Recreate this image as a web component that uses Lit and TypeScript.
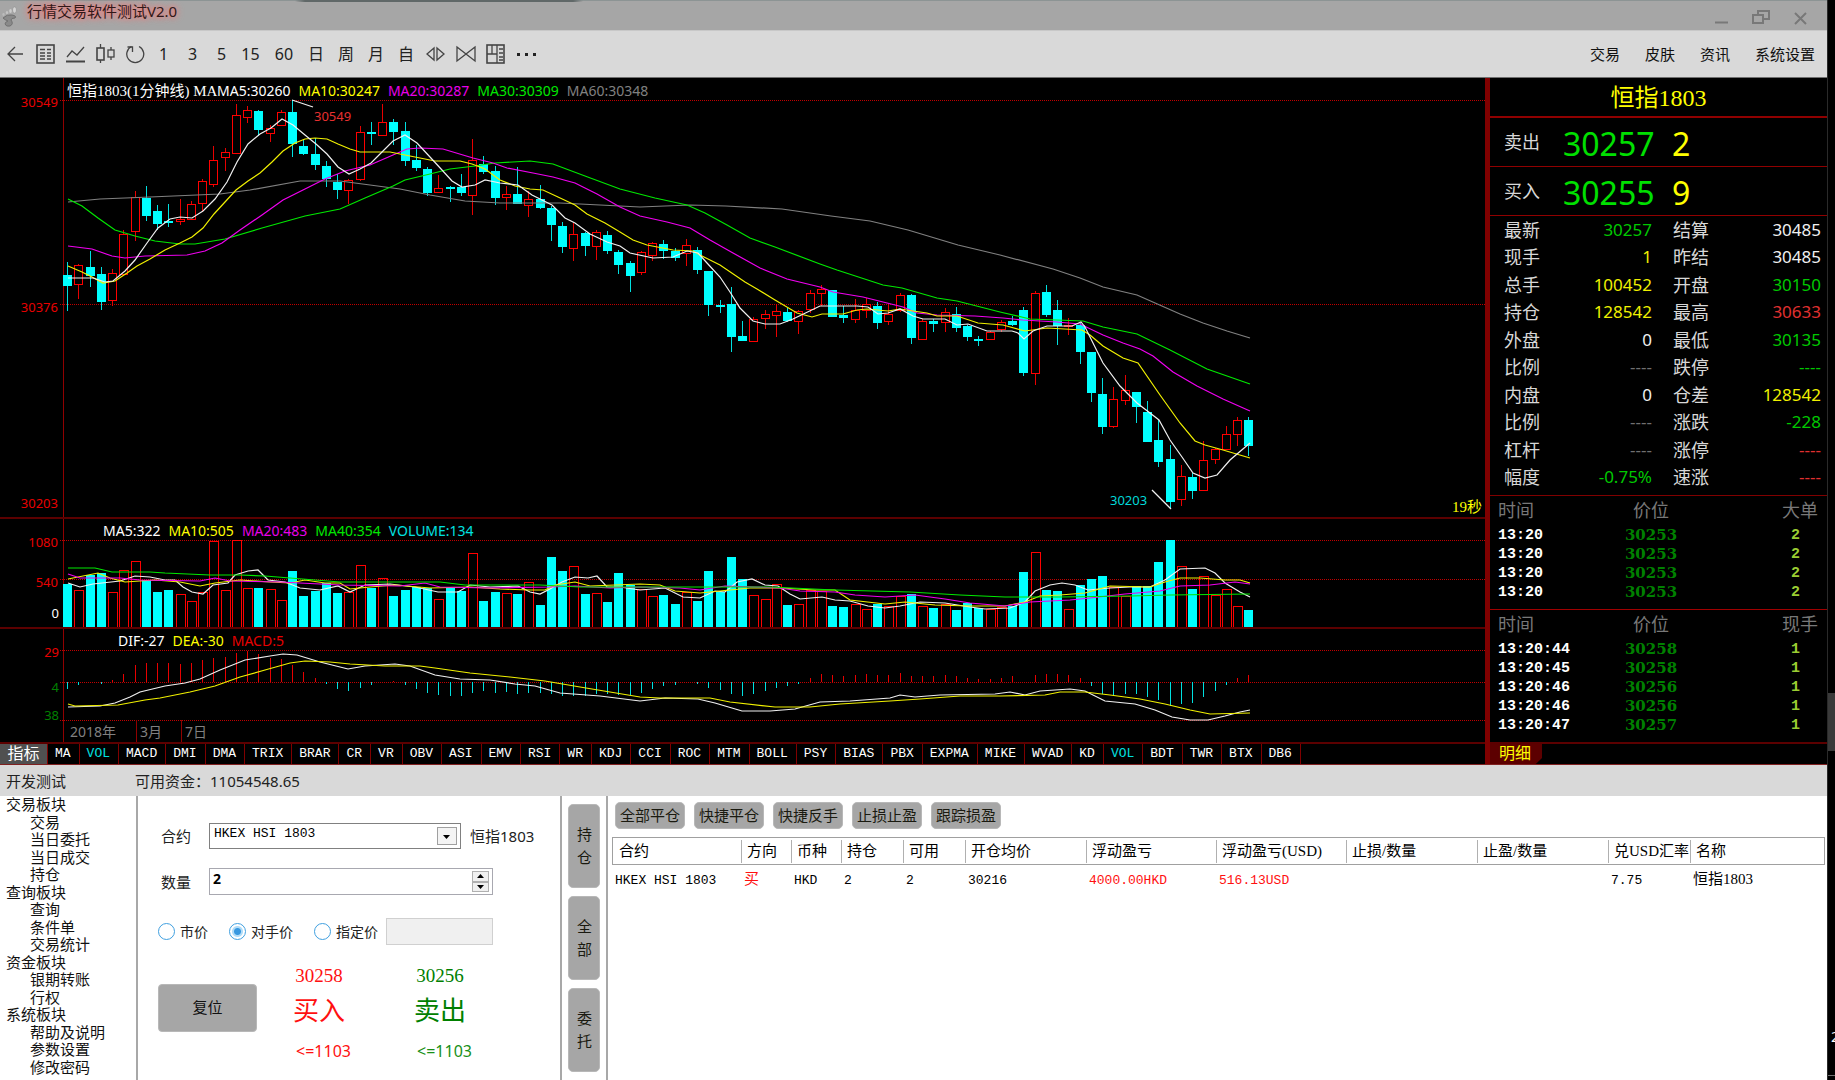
import { LitElement, html, svg, css, nothing } from "lit";
import { customElement, property, state } from "lit/decorators.js";
import { classMap } from "lit/directives/class-map.js";

type Candle = [number, number, number, number, number]; // up?, high, top, bottom, low
type Point = [number, number];

/* One column per minute: 1 = rising (hollow red), 0 = falling (solid cyan). */
const CANDLES: Candle[] = [
  [0,262,275,285,311],[1,264,265,284,299],[0,251,267,275,287],[0,267,274,301,310],[1,269,273,300,306],
  [1,230,234,274,275],[1,191,197,231,241],[0,186,198,215,221],[0,205,211,223,230],[0,204,221,222,227],
  [1,199,219,221,225],[1,201,204,219,219],[1,179,181,203,212],[1,146,160,184,187],[1,148,152,157,171],
  [1,104,115,153,153],[1,106,110,117,123],[0,110,111,129,136],[1,125,128,133,142],[1,110,112,125,125],
  [0,100,112,143,157],[0,140,146,153,155],[0,138,154,164,170],[0,161,166,178,187],[0,174,182,189,199],
  [1,179,180,190,204],[1,126,132,179,181],[0,122,132,133,145],[1,104,122,135,135],[0,119,122,131,145],
  [0,122,131,160,166],[0,145,160,167,171],[0,167,169,192,196],[1,175,188,192,192],[0,186,187,188,202],
  [0,174,187,192,196],[1,139,160,195,215],[0,156,164,171,174],[0,166,171,197,205],[1,186,194,197,210],
  [0,167,194,203,203],[1,191,199,205,217],[0,185,199,207,209],[0,206,208,224,241],[0,222,226,246,253],
  [1,223,234,248,261],[0,232,233,245,256],[1,230,232,246,260],[0,231,235,250,254],[0,250,252,264,274],
  [0,261,263,275,292],[1,251,252,272,275],[1,242,243,255,261],[0,240,244,250,259],[0,248,251,257,261],
  [1,239,245,253,266],[0,247,250,269,274],[0,271,271,304,316],[0,300,305,306,313],[0,287,304,336,352],
  [0,321,336,340,341],[1,317,319,341,341],[1,310,314,318,329],[1,304,311,315,337],[0,308,312,320,322],
  [1,310,311,321,334],[1,290,293,309,313],[1,285,289,293,306],[0,290,290,316,317],[0,306,315,317,323],
  [1,299,310,319,323],[1,298,304,310,318],[0,302,306,322,329],[1,304,314,321,325],[1,293,295,310,312],
  [0,294,295,337,344],[1,319,321,339,339],[0,319,321,323,332],[1,308,312,322,332],[0,307,314,327,332],
  [0,325,326,336,341],[0,336,339,340,346],[1,331,332,339,340],[1,320,322,329,332],[0,316,321,324,326],
  [0,307,310,372,376],[1,291,293,373,385],[0,285,292,314,317],[0,300,310,325,345],[1,318,325,326,335],
  [0,323,325,351,364],[0,352,352,392,402],[0,378,394,426,434],[1,387,399,426,428],[1,375,390,400,405],
  [0,392,392,406,423],[0,401,412,441,442],[0,420,440,461,467],[0,445,459,501,509],[1,465,476,499,506],
  [0,473,477,490,499],[1,441,460,490,490],[1,448,449,459,464],[1,426,434,449,449],[1,417,420,434,446],
  [0,417,420,445,456],
];

const VOLUME_TOPS = [
  584,590,575,573,592,570,561,580,592,590,594,601,592,541,590,540,588,588,589,600,
  571,596,591,583,593,592,565,588,578,596,590,587,588,599,588,591,553,601,592,593,
  594,582,605,557,571,566,594,593,602,573,585,589,596,595,604,592,601,571,592,557,
  579,595,599,584,605,604,590,591,606,607,604,609,604,606,596,594,606,608,604,610,
  603,608,609,607,606,572,552,590,591,609,585,579,576,587,596,586,586,562,540,566,
  589,576,595,589,606,610,
];

const MACD_BARS = [
  -7,-3,0,-2,2,8,17,19,19,19,18,19,22,24,25,29,31,28,24,23,17,10,4,-2,-7,-9,-6,-3,0,1,
  -3,-7,-11,-13,-14,-14,-11,-9,-11,-10,-12,-11,-11,-12,-14,-14,-14,-12,-12,-13,-13,-11,
  -7,-4,-3,0,-2,-6,-8,-12,-14,-12,-9,-6,-4,-2,4,8,7,6,7,8,7,7,9,6,6,6,7,6,4,3,3,4,6,0,
  7,8,8,7,4,-4,-12,-14,-12,-12,-15,-18,-24,-22,-21,-15,-9,-3,4,7,
];

const PRICE_LINES: { cls: string; pts: Point[] }[] = [
  { cls: "l-gray", pts: [[68,202],[100,199],[150,197],[220,194],[250,190],[300,181],[340,181],[370,185],[400,189],[430,195],[465,201],[500,203],[560,203],[600,205],[640,207],[690,205],[726,206],[782,209],[831,216],[870,221],[908,230],[958,245],[1000,255],[1053,269],[1080,278],[1103,287],[1137,295],[1180,314],[1203,323],[1227,331],[1250,338]] },
  { cls: "l-green", pts: [[68,199],[82,206],[98,218],[115,230],[135,236],[155,241],[180,244],[195,244],[225,239],[262,228],[305,216],[340,209],[365,198],[393,186],[405,180],[430,174],[450,169],[475,166],[495,163],[530,161],[553,164],[585,176],[620,189],[655,198],[687,205],[705,213],[727,225],[750,238],[775,247],[820,264],[837,270],[883,285],[902,288],[937,298],[957,301],[1000,312],[1030,319],[1083,321],[1103,327],[1137,334],[1170,350],[1207,369],[1250,384]] },
  { cls: "l-magenta", pts: [[68,246],[92,249],[112,256],[125,258],[145,256],[187,255],[205,251],[222,243],[240,230],[262,215],[283,200],[305,189],[325,179],[345,171],[370,165],[393,155],[407,149],[420,148],[443,149],[473,158],[493,163],[507,168],[533,173],[553,177],[575,183],[597,194],[620,207],[640,216],[667,222],[690,228],[710,240],[733,253],[760,268],[787,279],[820,287],[833,292],[863,297],[903,307],[917,313],[937,315],[975,316],[1003,318],[1023,320],[1057,322],[1080,324],[1103,335],[1123,343],[1140,349],[1153,356],[1173,372],[1197,386],[1223,399],[1250,411]] },
  { cls: "l-yellow", pts: [[68,266],[82,272],[92,277],[103,283],[115,281],[127,273],[137,266],[150,259],[165,250],[180,243],[192,237],[203,228],[214,214],[225,202],[236,190],[248,181],[260,173],[272,162],[283,151],[295,143],[305,139],[315,138],[327,139],[338,144],[350,149],[360,152],[390,152],[405,155],[435,161],[460,161],[472,164],[485,169],[500,180],[515,186],[530,189],[543,190],[558,197],[575,205],[587,214],[605,223],[620,232],[633,240],[647,245],[673,250],[693,251],[700,255],[720,265],[745,282],[757,289],[775,300],[797,313],[812,317],[822,314],[843,314],[857,310],[867,309],[888,311],[900,309],[913,311],[927,313],[937,316],[957,316],[978,323],[1003,325],[1025,331],[1047,328],[1082,330],[1090,335],[1103,346],[1123,358],[1138,363],[1160,395],[1180,423],[1195,441],[1205,445],[1223,450],[1250,458]] },
  { cls: "l-white", pts: [[68,278],[93,278],[105,282],[113,281],[125,271],[135,260],[147,243],[158,228],[170,219],[180,217],[192,218],[203,211],[215,199],[227,182],[237,162],[248,144],[260,134],[271,128],[282,119],[293,125],[305,135],[316,144],[327,154],[338,167],[349,174],[360,169],[371,163],[382,152],[393,141],[405,135],[417,143],[430,157],[442,170],[452,181],[462,187],[475,185],[485,180],[500,183],[518,185],[532,195],[552,205],[565,218],[575,223],[590,234],[607,242],[620,246],[630,253],[653,258],[673,257],[687,251],[698,253],[707,263],[720,277],[730,292],[740,308],[753,321],[765,324],[780,324],[793,319],[820,306],[857,306],[868,307],[878,314],[888,313],[900,309],[913,316],[923,319],[945,319],[957,325],[968,324],[987,331],[1012,331],[1018,333],[1024,339],[1033,331],[1047,326],[1072,326],[1081,322],[1085,327],[1103,363],[1120,386],[1137,403],[1159,420],[1170,440],[1182,457],[1193,473],[1205,478],[1217,475],[1230,460],[1250,443]] },
];

const VOLUME_LINES: { cls: string; pts: Point[] }[] = [
  { cls: "l-white", pts: [[68,583],[80,587],[93,584],[120,581],[135,576],[150,577],[165,580],[175,580],[183,587],[192,592],[203,594],[213,585],[228,583],[235,575],[248,571],[258,570],[268,580],[285,582],[300,588],[320,590],[338,586],[350,592],[365,585],[390,584],[415,587],[438,592],[458,592],[470,585],[490,587],[518,586],[530,592],[540,594],[550,589],[562,582],[575,577],[588,578],[597,576],[607,587],[620,587],[640,590],[665,588],[683,597],[700,598],[715,591],[725,592],[737,582],[752,579],[765,585],[778,586],[790,594],[800,599],[822,597],[835,600],[850,601],[868,606],[885,608],[900,606],[920,602],[945,603],[970,607],[985,609],[1010,608],[1025,602],[1035,591],[1050,585],[1062,583],[1075,585],[1088,590],[1110,588],[1130,587],[1150,587],[1165,580],[1180,569],[1205,568],[1215,573],[1225,583],[1240,592],[1250,597]] },
  { cls: "l-yellow", pts: [[68,579],[98,573],[110,578],[125,582],[155,580],[180,582],[200,586],[215,583],[240,580],[270,582],[290,583],[305,580],[325,583],[340,583],[350,589],[370,587],[395,585],[430,588],[470,587],[500,589],[530,590],[545,590],[555,585],[575,582],[590,586],[640,584],[660,585],[675,591],[700,593],[730,590],[750,588],[780,588],[815,590],[835,590],[850,600],[885,604],[905,602],[935,605],[970,606],[1005,606],[1025,602],[1040,596],[1060,595],[1085,593],[1110,586],[1150,587],[1165,582],[1180,578],[1200,578],[1225,580],[1240,580],[1250,583]] },
  { cls: "l-magenta", pts: [[68,574],[80,578],[120,578],[140,580],[200,581],[215,578],[230,581],[280,582],[340,585],[400,586],[425,583],[440,587],[490,588],[550,587],[575,586],[610,588],[640,587],[680,588],[700,590],[725,586],[780,588],[800,591],[835,592],[855,595],[885,597],[915,595],[945,599],[970,603],[1005,606],[1030,602],[1070,600],[1090,598],[1125,594],[1160,591],[1180,586],[1210,585],[1235,582],[1250,584]] },
  { cls: "l-green", pts: [[68,568],[95,568],[112,572],[150,572],[165,573],[210,575],[240,575],[265,576],[290,578],[340,582],[380,582],[440,582],[465,585],[540,585],[580,587],[640,587],[720,587],[770,587],[835,590],[910,592],[960,595],[1005,597],[1060,597],[1130,596],[1170,595],[1250,594]] },
];

const MACD_LINES: { cls: string; pts: Point[] }[] = [
  { cls: "l-white", pts: [[68,707],[100,706],[115,703],[130,697],[140,692],[165,686],[185,683],[200,679],[220,670],[245,660],[270,656],[283,654],[297,655],[320,662],[348,669],[365,666],[395,664],[410,666],[435,675],[460,679],[490,680],[515,684],[535,686],[560,693],[600,696],[640,701],[665,698],[698,699],[715,703],[742,711],[770,711],[795,709],[820,702],[850,701],[890,698],[900,695],[915,697],[940,695],[995,694],[1010,692],[1025,695],[1040,691],[1070,689],[1085,691],[1105,701],[1135,704],[1155,710],[1172,717],[1190,720],[1208,720],[1225,716],[1240,712],[1250,710]] },
  { cls: "l-yellow", pts: [[68,704],[75,706],[118,705],[145,700],[160,698],[190,692],[215,686],[240,677],[265,670],[290,663],[305,661],[330,662],[350,664],[385,666],[420,666],[435,668],[470,673],[510,677],[545,681],[580,687],[640,697],[660,698],[710,698],[730,702],[775,707],[810,707],[840,704],[890,701],[920,699],[960,696],[1000,696],[1045,695],[1060,692],[1085,692],[1110,695],[1140,699],[1165,704],[1190,710],[1210,714],[1250,713]] },
];

const colX = (i: number) => Math.round(67 + 11.25 * i);
const path = (pts: Point[]) => pts.map((p) => p.join(",")).join(" ");

@customElement("market-chart")
class MarketChart extends LitElement {
  static styles = css`
    :host { display: flex; flex-direction: column; min-width: 0; background: #000; font-family: "Noto Sans", "Noto Sans CJK SC", sans-serif; }
    .pane { display: grid; border-bottom: 2px solid #5c0000; }
    .pane > * { grid-area: 1 / 1; min-width: 0; }
    .plot { display: block; width: 100%; overflow: hidden; }
    .price { height: 439px; }
    .volume { height: 108px; }
    .macd { height: 113px; }
    .legend { display: flex; gap: 8px; align-self: start; z-index: 1; font-size: 14px; line-height: 20px; white-space: nowrap; }
    .legend-price { padding: 3px 0 0 67px; }
    .legend-volume { padding: 2px 0 0 103px; }
    .legend-macd { padding: 2px 0 0 118px; }
    .name { width: 142px; font: 15px/20px "Liberation Serif", "Noto Sans CJK SC", serif; color: #fff; }
    .c-white { color: #fff; } .c-yellow { color: #ffff00; } .c-magenta { color: #e800e8; }
    .c-green { color: #00e800; } .c-gray { color: #808080; } .c-cyan { color: #00e0e0; } .c-red { color: #e80000; }
    .grid { stroke: #c00000; stroke-dasharray: 1 1; shape-rendering: crispEdges; }
    .axis { stroke: #900000; stroke-width: 1; shape-rendering: crispEdges; }
    .up { fill: #000; stroke: #ff0000; shape-rendering: crispEdges; }
    .bar-up { fill: none; stroke: #ff0000; shape-rendering: crispEdges; }
    .down { fill: #00ffff; stroke: none; shape-rendering: crispEdges; }
    .wick-up { stroke: #e80000; shape-rendering: crispEdges; }
    .wick-down { stroke: #00e0e0; shape-rendering: crispEdges; }
    .line { fill: none; stroke-width: 1.2; }
    .l-white { stroke: #f0f0f0; } .l-yellow { stroke: #f0f000; } .l-magenta { stroke: #f000f0; }
    .l-green { stroke: #00e800; } .l-gray { stroke: #808080; }
    text { font-size: 13px; fill: #e80000; }
    .t-end { text-anchor: end; }
    .t-white { fill: #fff; } .t-green { fill: #008000; } .t-gray { fill: #808080; font-size: 14px; }
    .t-red { fill: #e83030; } .t-cyan { fill: #00d8d8; }
    .t-count { font: 15px "Liberation Serif", "Noto Sans CJK SC", serif; fill: #ffff00; }
  `;

  private hLine(y: number) {
    return svg`<line class="grid" x1="60" x2="100%" y1=${y + 0.5} y2=${y + 0.5}></line>`;
  }

  private lines(list: { cls: string; pts: Point[] }[]) {
    return list.map((l) => svg`<polyline class="line ${l.cls}" points=${path(l.pts)}></polyline>`);
  }

  private candle(c: Candle, i: number) {
    const [up, high, top, bottom, low] = c;
    const x = colX(i);
    const h = Math.max(bottom - top, 1);
    return svg`
      <line class=${up ? "wick-up" : "wick-down"} x1=${x + 0.5} x2=${x + 0.5} y1=${high} y2=${low}></line>
      ${up
        ? svg`<rect class="up" x=${x - 3.5} y=${top + 0.5} width="8" height=${h}></rect>`
        : svg`<rect class="down" x=${x - 4} y=${top} width="9" height=${h + 1}></rect>`}`;
  }

  private volumeBar(top: number, i: number) {
    const x = colX(i);
    return CANDLES[i][0]
      ? svg`<rect class="bar-up" x=${x - 3.5} y=${top + 0.5} width="9" height=${629 - top}></rect>`
      : svg`<rect class="down" x=${x - 4} y=${top} width="9" height=${629 - top}></rect>`;
  }

  private macdBar(v: number, i: number) {
    if (!v) return nothing;
    const x = colX(i) + 0.5;
    return svg`<line class=${v > 0 ? "wick-up" : "wick-down"} x1=${x} x2=${x} y1="682" y2=${682 - v}></line>`;
  }

  render() {
    return html`
      <section class="pane">
        <div class="legend legend-price">
          <span class="name">恒指1803(1分钟线) MA</span>
          <span class="c-white">MA5:30260</span><span class="c-yellow">MA10:30247</span>
          <span class="c-magenta">MA20:30287</span><span class="c-green">MA30:30309</span>
          <span class="c-gray">MA60:30348</span>
        </div>
        <svg class="plot price" role="img" aria-label="K线">
          <g transform="translate(0 -78)">
            ${this.hLine(100)}${this.hLine(304)}
            <line class="axis" x1="63.5" x2="63.5" y1="78" y2="520"></line>
            ${CANDLES.map((c, i) => this.candle(c, i))}
            ${this.lines(PRICE_LINES)}
            <line class="line l-white" x1="292" y1="100" x2="313" y2="107"></line>
            <line class="line l-white" x1="1152" y1="490" x2="1171" y2="509"></line>
            <text class="t-end" x="58" y="107">30549</text>
            <text class="t-end" x="58" y="312">30376</text>
            <text class="t-end" x="58" y="508">30203</text>
            <text class="t-red" x="314" y="121">30549</text>
            <text class="t-cyan" x="1110" y="505">30203</text>
          </g>
          <text class="t-count t-end" x="100%" dx="-3" y="434">19秒</text>
        </svg>
      </section>
      <section class="pane">
        <div class="legend legend-volume">
          <span class="c-white">MA5:322</span><span class="c-yellow">MA10:505</span>
          <span class="c-magenta">MA20:483</span><span class="c-green">MA40:354</span>
          <span class="c-cyan">VOLUME:134</span>
        </div>
        <svg class="plot volume" role="img" aria-label="成交量">
          <g transform="translate(0 -519)">
            ${this.hLine(540)}${this.hLine(579)}
            <line class="axis" x1="63.5" x2="63.5" y1="518" y2="630"></line>
            ${VOLUME_TOPS.map((v, i) => this.volumeBar(v, i))}
            ${this.lines(VOLUME_LINES)}
            <text class="t-end" x="58" y="547">1080</text>
            <text class="t-end" x="58" y="587">540</text>
            <text class="t-end t-white" x="59" y="618">0</text>
          </g>
        </svg>
      </section>
      <section class="pane">
        <div class="legend legend-macd">
          <span class="c-white">DIF:-27</span><span class="c-yellow">DEA:-30</span><span class="c-red">MACD:5</span>
        </div>
        <svg class="plot macd" role="img" aria-label="MACD">
          <g transform="translate(0 -629)">
            ${this.hLine(650)}${this.hLine(682)}${this.hLine(720)}
            <line class="axis" x1="63.5" x2="63.5" y1="628" y2="743"></line>
            <line class="axis" x1="136.5" x2="136.5" y1="720" y2="743"></line>
            <line class="axis" x1="181.5" x2="181.5" y1="720" y2="743"></line>
            ${MACD_BARS.map((v, i) => this.macdBar(v, i))}
            ${this.lines(MACD_LINES)}
            <text class="t-end" x="59" y="657">29</text>
            <text class="t-end t-green" x="59" y="692">4</text>
            <text class="t-end t-green" x="59" y="720">38</text>
            <text class="t-gray" x="70" y="737">2018年</text>
            <text class="t-gray" x="140" y="737">3月</text>
            <text class="t-gray" x="185" y="737">7日</text>
          </g>
        </svg>
      </section>`;
  }
}

const INDICATORS = "MA VOL MACD DMI DMA TRIX BRAR CR VR OBV ASI EMV RSI WR KDJ CCI ROC MTM BOLL PSY BIAS PBX EXPMA MIKE WVAD KD VOL BDT TWR BTX DB6".split(" ");

@customElement("indicator-tabs")
class IndicatorTabs extends LitElement {
  @state() private active = "VOL";
  static styles = css`
    :host { display: flex; height: 20px; min-width: 0; background: #000; }
    .tab { padding: 0 8px 0 7px; border: 0; border-right: 1px solid #800000; background: none; color: #fff; font: 13px/20px "Liberation Mono", monospace; }
    .on { color: #00e0e0; }
    .lead { width: 48px; padding: 0 0 4px; background: #505050; font: 16px/16px "Noto Sans CJK SC", sans-serif; }
  `;
  render() {
    return html`<button class="tab lead">指标</button>
      ${INDICATORS.map((t) => html`<button class=${classMap({ tab: true, on: t === this.active })} @click=${() => (this.active = t)}>${t}</button>`)}`;
  }
}

type Quote = [string, string, string, string, string, string];
const QUOTES: Quote[] = [
  ["最新", "30257", "green", "结算", "30485", "white"],
  ["现手", "1", "yellow", "昨结", "30485", "white"],
  ["总手", "100452", "yellow", "开盘", "30150", "green"],
  ["持仓", "128542", "yellow", "最高", "30633", "red"],
  ["外盘", "0", "white", "最低", "30135", "green"],
  ["比例", "----", "gray", "跌停", "----", "green"],
  ["内盘", "0", "white", "仓差", "128542", "yellow"],
  ["比例", "----", "gray", "涨跌", "-228", "green"],
  ["杠杆", "----", "gray", "涨停", "----", "red"],
  ["幅度", "-0.75%", "green", "速涨", "----", "red"],
];
const BIG_ORDERS = [["13:20", "30253", "2"], ["13:20", "30253", "2"], ["13:20", "30253", "2"], ["13:20", "30253", "2"]];
const TICKS = [["13:20:44", "30258", "1"], ["13:20:45", "30258", "1"], ["13:20:46", "30256", "1"], ["13:20:46", "30256", "1"], ["13:20:47", "30257", "1"]];

@customElement("quote-panel")
class QuotePanel extends LitElement {
  static styles = css`
    :host { display: flex; flex-direction: column; border-left: 5px solid #800000; background: #000; color: #d8d8d8; font-family: "Noto Sans", "Noto Sans CJK SC", sans-serif; }
    .name { margin: 0; padding-top: 3px; font: 24px/35px "Liberation Serif", "Noto Sans CJK SC", serif; color: #ffff00; text-align: center; border-bottom: 2px solid #900000; }
    .deal { display: flex; align-items: center; height: 48px; padding-left: 14px; border-bottom: 1px solid #900000; font-size: 18px; }
    .deal b { padding-top: 3px; font-weight: 400; font-size: 32px; line-height: 40px; color: #00e000; width: 109px; }
    .deal i { padding-top: 3px; font-style: normal; font-size: 32px; line-height: 40px; color: #ffff00; }
    .deal span { width: 59px; }
    .quotes { display: grid; grid-template-columns: 60px 88px 57px 1fr; grid-auto-rows: 1fr; align-items: center; height: 275px; padding: 0 6px 4px 14px; font-size: 18px; border-bottom: 1px solid #800000; }
    .val { font-size: 17px; text-align: right; }
    .second { padding-left: 21px; white-space: nowrap; }
    .green { color: #00c800; } .yellow { color: #f0f000; } .red { color: #e03030; } .white { color: #f0f0f0; } .gray { color: #707070; }
    .trades { border-collapse: collapse; table-layout: fixed; width: 100%; }
    .trades th { padding: 0 0 2px; font-weight: 400; font-size: 18px; line-height: 28px; color: #787878; }
    .trades td { padding: 0; font: bold 15px/19px "Liberation Mono", monospace; text-align: center; }
    .trades th:first-child { text-align: left; padding-left: 8px; width: 108px; }
    .trades td.time { text-align: left; padding-left: 8px; color: #fff; }
    .trades th:last-child { text-align: right; padding-right: 9px; width: 122px; }
    .trades td.price { font-family: "DejaVu Serif", serif; color: #008000; }
    .trades td.qty { padding-left: 68px; color: #9acd32; }
    .ticks { border-bottom: 2px solid #5c0000; flex: 1; }
    .big { height: 113px; border-bottom: 1px solid #a00000; }
    .foot { height: 20px; display: flex; }
    .detail { border: 0; padding: 0 11px 4px 9px; background: #5c0000; color: #ffff00; font: 16px/16px "Noto Sans CJK SC", sans-serif; clip-path: polygon(0 0, 100% 0, 100% 70%, 88% 100%, 0 100%); }
  `;

  private table(last: string, rows: string[][]) {
    return html`<table class="trades">
      <thead><tr><th>时间</th><th>价位</th><th>${last}</th></tr></thead>
      <tbody>${rows.map((r) => html`<tr><td class="time">${r[0]}</td><td class="price">${r[1]}</td><td class="qty">${r[2]}</td></tr>`)}</tbody>
    </table>`;
  }

  render() {
    return html`
      <h2 class="name">恒指1803</h2>
      <div class="deal"><span>卖出</span><b>30257</b><i>2</i></div>
      <div class="deal"><span>买入</span><b>30255</b><i>9</i></div>
      <div class="quotes">
        ${QUOTES.map(([a, av, ac, b, bv, bc]) => html`
          <span>${a}</span><span class="val ${ac}">${av}</span>
          <span class="second">${b}</span><span class="val ${bc}">${bv}</span>`)}
      </div>
      <div class="big">${this.table("大单", BIG_ORDERS)}</div>
      <div class="ticks">${this.table("现手", TICKS)}</div>
      <div class="foot"><button class="detail">明细</button></div>`;
  }
}

@customElement("order-form")
class OrderForm extends LitElement {
  @property({ type: Number }) quantity = 2;
  static styles = css`
    :host { display: block; box-sizing: border-box; padding: 26px 20px 0 20px; font: 15px/20px "Noto Sans", "Noto Sans CJK SC", sans-serif; color: #222; white-space: nowrap; }
    .row { display: flex; align-items: center; }
    .label { width: 51px; padding-left: 3px; box-sizing: border-box; flex: none; }
    .contract { height: 27px; }
    .pick { display: grid; width: 252px; height: 26px; margin-right: 9px; flex: none; }
    .pick > * { grid-area: 1 / 1; }
    .pick select { appearance: none; padding: 0 4px 4px; border: 1px solid #808080; border-radius: 0; background: #fff; color: #000; font: 13px/18px "Liberation Mono", monospace; }
    .arrow { justify-self: end; align-self: center; margin-right: 4px; pointer-events: none; }
    .amount { margin-top: 19px; }
    .spin { display: flex; width: 284px; height: 27px; box-sizing: border-box; border: 1px solid #a8a8b0; padding: 2px 3px 2px 0; }
    .spin input { flex: 1; min-width: 0; appearance: textfield; border: 0; padding: 0 3px 5px; font: bold 14px/16px "Noto Sans", sans-serif; color: #000; outline: 0; }
    .spin input::-webkit-inner-spin-button { display: none; }
    .steps { display: flex; flex-direction: column; width: 17px; }
    .step { flex: 1; padding: 0; border: 1px solid #b0b0b0; background: #f0f0f0; display: grid; place-items: center; }
    .kinds { margin-top: 23px; height: 27px; font-size: 14px; }
    .kind { display: flex; align-items: center; gap: 5px; margin-right: 21px; }
    .kind + .kind + .kind { margin-right: 8px; }
    .kind input { appearance: none; width: 17px; height: 17px; margin: 0; border: 1px solid #40a0e0; border-radius: 50%; background: #fff; }
    .kind input:checked { background: radial-gradient(circle, #3898e0 0 3px, #b0dcf8 4px 5px, #fff 6px); }
    .fixed { width: 107px; min-width: 0; height: 27px; box-sizing: border-box; border: 1px solid #d0d0d0; background: #f0f0f0; }
    .trade { display: flex; margin-top: 18px; }
    .reset { align-self: start; width: 99px; height: 48px; margin-top: 21px; border: 1px solid #b8b8b8; border-radius: 4px; background: #a6a6a6; font: inherit; color: #111; padding: 0 0 2px; }
    .side { display: flex; flex-direction: column; align-items: center; border: 0; padding: 0; background: none; width: 62px; font-family: inherit; }
    .buy { margin-left: 31px; color: #ff1010; }
    .sell { margin-left: 59px; color: #189018; }
    .quote { font: 19px/26px "Liberation Serif", serif; }
    .act { font-size: 26px; line-height: 42px; }
    .sell .act, .sell .quote { color: #008000; }
    .limit { font-size: 16px; line-height: 24px; padding: 8px 0 0 9px; }
  `;
  private step(d: number) { this.quantity = Math.max(0, this.quantity + d); }
  render() {
    return html`
      <div class="row contract">
        <label class="label" for="contract">合约</label>
        <span class="pick">
          <select id="contract"><option>HKEX HSI 1803</option></select>
          <svg class="arrow" width="20" height="18"><rect x="0.5" y="0.5" width="19" height="17" fill="#f4f4f4" stroke="#a0a0a0"/><path d="M6 8h7l-3.500 4z" fill="#000"/></svg>
        </span>
        <span>恒指1803</span>
      </div>
      <div class="row amount">
        <label class="label" for="qty">数量</label>
        <span class="spin">
          <input id="qty" type="number" .value=${String(this.quantity)} />
          <span class="steps">
            <button class="step" aria-label="增加" @click=${() => this.step(1)}><svg width="7" height="4"><path d="M0 4h7L3.500 0z"/></svg></button>
            <button class="step" aria-label="减少" @click=${() => this.step(-1)}><svg width="7" height="4"><path d="M0 0h7L3.500 4z"/></svg></button>
          </span>
        </span>
      </div>
      <div class="row kinds">
        <label class="kind"><input type="radio" name="kind" />市价</label>
        <label class="kind"><input type="radio" name="kind" checked />对手价</label>
        <label class="kind"><input type="radio" name="kind" />指定价</label>
        <input class="fixed" aria-label="指定价" disabled />
      </div>
      <div class="trade">
        <button class="reset">复位</button>
        <button class="side buy"><span class="quote">30258</span><span class="act">买入</span><span class="limit">&lt;=1103</span></button>
        <button class="side sell"><span class="quote">30256</span><span class="act">卖出</span><span class="limit">&lt;=1103</span></button>
      </div>`;
  }
}

const COLUMNS: [string, string, string][] = [
  ["合约", "c129", "HKEX HSI 1803"], ["方向", "c50", "买"], ["币种", "c50", "HKD"], ["持仓", "c62", "2"],
  ["可用", "c62", "2"], ["开仓均价", "c121", "30216"], ["浮动盈亏", "c130", "4000.00HKD"],
  ["浮动盈亏(USD)", "c130", "516.13USD"], ["止损/数量", "c131", ""], ["止盈/数量", "c131", ""],
  ["兑USD汇率", "c82", "7.75"], ["名称", "rest", "恒指1803"],
];
const RED = new Set(["买", "4000.00HKD", "516.13USD"]);

@customElement("position-list")
class PositionList extends LitElement {
  static styles = css`
    :host { display: block; min-width: 0; padding: 6px 2px 0 4px; font: 15px/20px "Liberation Serif", "Noto Sans CJK SC", serif; color: #000; }
    .actions { display: flex; gap: 9px; padding-left: 3px; margin-bottom: 8px; }
    .action { width: 70px; height: 27px; padding: 0 0 2px; border: 1px solid #b8b8b8; border-radius: 5px; background: #a6a6a6; color: #1a1a10; font: 15px/20px "Noto Sans CJK SC", sans-serif; white-space: nowrap; }
    .list { width: 100%; table-layout: fixed; border-collapse: separate; border-spacing: 0; }
    .list th { box-sizing: border-box; height: 28px; padding: 0 0 0 6px; border: solid #a0a0a0; border-width: 1px 0; text-align: left; font-weight: 400; white-space: nowrap; }
    .list th:first-child { border-left-width: 1px; }
    .list th:last-child { border-right-width: 1px; }
    .list th + th { background: linear-gradient(#b0b0b0, #b0b0b0) no-repeat left center / 1px 23px; }
    .list td { height: 28px; padding: 0 0 0 3px; font-size: 15px; white-space: nowrap; }
    .mono { font: 13px/18px "Liberation Mono", monospace; }
    .red { color: #ff1010; }
    .c129 { width: 129px; } .c50 { width: 50px; } .c62 { width: 62px; } .c121 { width: 121px; }
    .c130 { width: 130px; } .c131 { width: 131px; } .c82 { width: 82px; }
  `;
  render() {
    return html`
      <div class="actions">${["全部平仓", "快捷平仓", "快捷反手", "止损止盈", "跟踪损盈"].map((a) => html`<button class="action">${a}</button>`)}</div>
      <table class="list">
        <thead><tr>${COLUMNS.map(([t, c]) => html`<th class=${c}>${t}</th>`)}</tr></thead>
        <tbody><tr>${COLUMNS.map(([, , v]) => html`<td class=${classMap({ red: RED.has(v) })}><span class=${/[^\x00-\x7f]/.test(v) ? "" : "mono"}>${v}</span></td>`)}</tr></tbody>
      </table>`;
  }
}

const TREE: [string, string[]][] = [
  ["交易板块", ["交易", "当日委托", "当日成交", "持仓"]],
  ["查询板块", ["查询", "条件单", "交易统计"]],
  ["资金板块", ["银期转账", "行权"]],
  ["系统板块", ["帮助及说明", "参数设置", "修改密码"]],
];

const icon = {
  back: svg`<path d="M17 10H2M9 3L2 10l7 7"/>`,
  table: svg`<rect x="1" y="1" width="17" height="18" stroke-width="1.600"/><path d="M4 5.500h5M11 5.500h4M4 9h5M11 9h4M4 12h5M11 12h4M4 15h5M11 15h4" stroke-width="1.600"/>`,
  trend: svg`<path d="M1 13l5-6 5 4 7-8"/><path d="M0 17.500h19" stroke-width="2"/>`,
  candle: svg`<rect x="1" y="4" width="7" height="12" stroke-width="1.600"/><path d="M4.500 0v4M4.500 16v3M15 3v3M15 13v3"/><rect x="12" y="6" width="6" height="7"/>`,
  reload: svg`<path d="M13 2.500a8.500 8.500 0 1 1-7.500 0"/><path d="M1.500 3h5v5"/>`,
  split: svg`<path d="M8 4L1 10l7 6zM11 4l7 6-7 6z"/>`,
  merge: svg`<path d="M1 3l9 7-9 7zM19 3l-9 7 9 7z"/>`,
  layout: svg`<rect x="1" y="1" width="17" height="18" stroke-width="1.600"/><path d="M11 1v18M1 10h10M6 1v9M13 5h4M13 9h4M13 13h4M13 16h4"/>`,
  more: svg`<path d="M1 10.500h3M9 10.500h3M17 10.500h3" stroke="#222" stroke-width="3"/>`,
};

@customElement("app-root")
class AppRoot extends LitElement {
  static styles = css`
    :host { display: grid; grid-template-columns: minmax(0, 1fr) 8px; min-height: 100vh; background: #000; font: 15px/20px "Noto Sans", "Noto Sans CJK SC", sans-serif; color: #111; }
    .window { display: flex; flex-direction: column; min-width: 0; }
    .titlebar { display: flex; height: 30px; background: linear-gradient(90deg, transparent 295px, #606868 305px 573px, transparent 583px) no-repeat top / 100% 2px, linear-gradient(#8c9494 0 1px, #a6a6a6 1px); border-bottom: 1px solid #c8c8c8; }
    .foot { margin: 6px 0 0 1px; flex: none; }
    .caption { margin: 0 auto 0 9px; font-size: 15px; line-height: 22px; font-weight: 400; color: #301818; text-shadow: 0 0 4px #e88080, 0 0 6px #e88080, 0 0 8px #e88080; }
    .winbtns { display: flex; gap: 20px; padding: 8px 16px 0 0; }
    .winbtn { width: 20px; height: 18px; padding: 0; border: 0; background: none; }
    .toolbar { display: flex; justify-content: space-between; align-items: center; height: 46px; padding: 0 12px 0 1px; background: #d9d9d9; border-bottom: 1px solid #707070; }
    .tools { display: flex; }
    .tool { width: 30px; height: 30px; padding: 0; border: 0; background: none; color: #222; font: 16px/24px "Noto Sans", "Noto Sans CJK SC", sans-serif; display: grid; place-items: center; }
    .digit { width: 29px; padding-right: 4px; }
    .wide { width: 34px; }
    .menu { display: flex; gap: 25px; }
    .menu a, .tree a { color: inherit; text-decoration: none; }
    .market { display: grid; grid-template-columns: minmax(0, 1fr) 342px; background: #000; }
    .charts { display: flex; flex-direction: column; min-width: 0; }
    .funds { display: flex; align-items: center; height: 31px; padding-left: 6px; background: #d9d9d9; border-top: 1px solid #802020; color: #222; }
    .user { width: 129px; }
    .desk { display: grid; grid-template-columns: 136px 424px 46px minmax(0, 1fr); flex: 1; background: #fff; border-bottom: 1px solid #c0c0c0; }
    .desk > * + * { border-left: 2px solid #a8a8a8; }
    .tree { display: flex; flex-direction: column; margin: 0; padding: 0 0 4px 6px; list-style: none; }
    .tree li { flex: 1; display: flex; align-items: center; line-height: 17px; }
    .tree .leaf { padding-left: 24px; }
    .sides { display: flex; flex-direction: column; gap: 8px; padding: 8px 6px; }
    .side { height: 84px; padding: 0 8px 2px; border: 1px solid #b8b8b8; border-radius: 5px; background: #a6a6a6; font: 15px/23px "Noto Sans CJK SC", sans-serif; color: #1a1a10; }
    .edge { display: flex; flex-direction: column; border-left: 1px solid #2a2a2a; overflow: hidden; }
    .thumb { height: 58px; margin-top: 693px; background: #3a3a3a; }
    .clock { margin: 275px 0 0 3px; color: #fff; font-size: 15px; line-height: 20px; }
    .rule { margin-top: auto; height: 5px; border-top: 1px solid #707070; }
  `;

  private icon(content: unknown) {
    return html`<svg width="20" height="20" fill="none" stroke="#444" stroke-width="1.3" aria-hidden="true">${content}</svg>`;
  }

  render() {
    const tool = (label: string, body: unknown, extra = "") =>
      html`<button class="tool ${extra}" aria-label=${label}>${body}</button>`;
    return html`
      <main class="window">
        <header class="titlebar">
          <svg class="foot" width="17" height="21" aria-hidden="true">
            <path d="M2 12q4-4 9-3 5 1 3 3-4 0-4 2 3 4-1 6-4 1-5-2 0-2 3-3-3-1-5-3z" fill="#8a8a8a" stroke="#707070"/>
            <ellipse cx="13.500" cy="4" rx="2" ry="3.200" fill="#d4d4d4" stroke="#8a8a8a" stroke-width="0.600"/><ellipse cx="9.500" cy="5" rx="1.300" ry="2" fill="#ccc"/>
            <ellipse cx="6" cy="6.500" rx="1.200" ry="1.600" fill="#c4c4c4"/><ellipse cx="2.500" cy="8.500" rx="1.200" ry="1.400" fill="#bbb"/>
          </svg>
          <h1 class="caption">行情交易软件测试V2.0</h1>
          <div class="winbtns">
            <button class="winbtn" aria-label="最小化"><svg width="20" height="18"><path d="M4 14.500h13" stroke="#787878" stroke-width="2"/></svg></button>
            <button class="winbtn" aria-label="还原"><svg width="20" height="18" fill="none" stroke="#787878" stroke-width="2"><rect x="2" y="7" width="10" height="8"/><path d="M7 7V3h11v8h-5"/></svg></button>
            <button class="winbtn" aria-label="关闭"><svg width="20" height="18"><path d="M4 5l11 11M15 5L4 16" stroke="#787878" stroke-width="2"/></svg></button>
          </div>
        </header>
        <nav class="toolbar">
          <div class="tools">
            ${tool("返回", this.icon(icon.back))}${tool("报价", this.icon(icon.table))}${tool("分时", this.icon(icon.trend))}
            ${tool("K线", this.icon(icon.candle))}${tool("刷新", this.icon(icon.reload))}
            ${["1", "3", "5", "15"].map((t) => tool(t, t, "digit"))}${tool("60", "60", "wide")}
            ${["日", "周", "月", "自"].map((t) => tool(t, t))}
            ${tool("放大", this.icon(icon.split))}${tool("缩小", this.icon(icon.merge))}
            ${tool("布局", this.icon(icon.layout))}${tool("更多", this.icon(icon.more))}
          </div>
          <div class="menu">${["交易", "皮肤", "资讯", "系统设置"].map((t) => html`<a href="#">${t}</a>`)}</div>
        </nav>
        <section class="market">
          <div class="charts"><market-chart></market-chart><indicator-tabs></indicator-tabs></div>
          <quote-panel></quote-panel>
        </section>
        <div class="funds"><span class="user">开发测试</span><span>可用资金：11054548.65</span></div>
        <section class="desk">
          <ul class="tree">
            ${TREE.map(([group, leaves]) => html`<li><a href="#">${group}</a></li>
              ${leaves.map((l) => html`<li class="leaf"><a href="#">${l}</a></li>`)}`)}
          </ul>
          <order-form></order-form>
          <div class="sides">
            ${["持仓", "全部", "委托"].map((t) => html`<button class="side">${t}</button>`)}
          </div>
          <position-list></position-list>
        </section>
      </main>
      <aside class="edge"><div class="thumb"></div><div class="clock">2</div><div class="rule"></div></aside>`;
  }
}
